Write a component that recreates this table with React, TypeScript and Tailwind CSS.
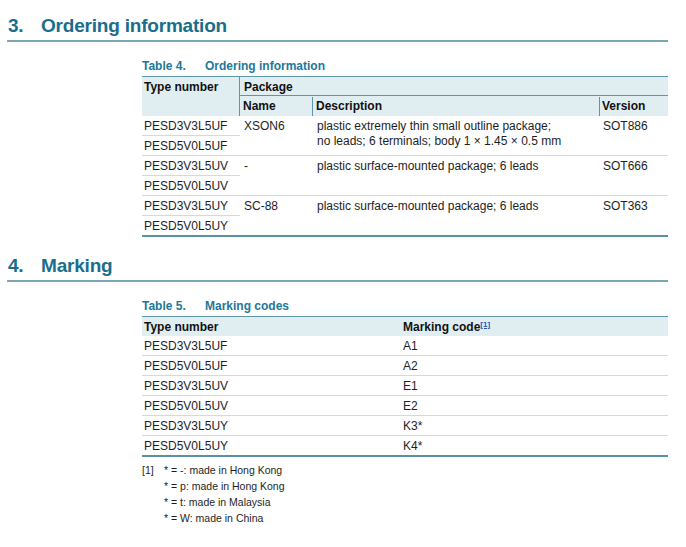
import React from "react";

const font = { fontFamily: '"Liberation Sans", Arial, sans-serif' };

function Heading({ num, title }: { num: string; title: string }) {
  return (
    <div className="ml-[7px] w-[661px] border-b-2 border-[#79a7b7] pb-[3px] pl-[1px]">
      <div className="flex text-[19px] font-bold leading-[22px] tracking-[-0.2px] text-[#1b6d8b]">
        <span className="w-[33px]">{num}</span>
        <span>{title}</span>
      </div>
    </div>
  );
}

function Caption({ num, title, mt }: { num: string; title: string; mt: string }) {
  return (
    <div className={`${mt} mb-[3px] ml-[142px] flex text-[12px] font-bold leading-[14px] text-[#21789a]`}>
      <span className="w-[63px]">{num}</span>
      <span>{title}</span>
    </div>
  );
}

type Group = {
  types: [string, string];
  name: string;
  desc: string[];
  version: string;
};

const groups: Group[] = [
  {
    types: ["PESD3V3L5UF", "PESD5V0L5UF"],
    name: "XSON6",
    desc: ["plastic extremely thin small outline package;", "no leads; 6 terminals; body 1 \u00d7 1.45 \u00d7 0.5 mm"],
    version: "SOT886",
  },
  {
    types: ["PESD3V3L5UV", "PESD5V0L5UV"],
    name: "-",
    desc: ["plastic surface-mounted package; 6 leads"],
    version: "SOT666",
  },
  {
    types: ["PESD3V3L5UY", "PESD5V0L5UY"],
    name: "SC-88",
    desc: ["plastic surface-mounted package; 6 leads"],
    version: "SOT363",
  },
];

const markings: [string, string][] = [
  ["PESD3V3L5UF", "A1"],
  ["PESD5V0L5UF", "A2"],
  ["PESD3V3L5UV", "E1"],
  ["PESD5V0L5UV", "E2"],
  ["PESD3V3L5UY", "K3*"],
  ["PESD5V0L5UY", "K4*"],
];

const notes = [
  "* = -: made in Hong Kong",
  "* = p: made in Hong Kong",
  "* = t: made in Malaysia",
  "* = W: made in China",
];

function OrderingTable() {
  return (
    <div className="ml-[142px] w-[526px] text-[12px] text-[#1e1e1e]">
      <div className="flex border-t border-[#5e96a8] bg-[#e1eef1] font-bold text-[#111]">
        <div className="w-[98px] border-r border-[#5e96a8] pl-[2px] pt-[1px] leading-[19px]">Type number</div>
        <div className="flex flex-1 flex-col">
          <div className="h-[19px] border-b border-[#5e96a8] pl-[4px] pt-[1px] leading-[19px]">Package</div>
          <div className="flex h-[20px] pt-[1px] leading-[19px]">
            <div className="w-[73px] border-r border-[#5e96a8] pl-[3px]">Name</div>
            <div className="w-[287px] border-r border-[#5e96a8] pl-[3px]">Description</div>
            <div className="flex-1 pl-[2px]">Version</div>
          </div>
        </div>
      </div>
      {groups.map((g, i) => (
        <div
          key={g.version}
          className={`flex ${i === groups.length - 1 ? "border-b-2 border-[#5a91a3]" : "border-b border-[#c6dee4]"}`}
        >
          <div className="w-[98px]">
            <div className="h-[20px] border-b border-[#c6dee4] pl-[2px] pt-[1px] leading-[19px]">{g.types[0]}</div>
            <div className="h-[19px] pl-[2px] pt-[1px] leading-[19px]">{g.types[1]}</div>
          </div>
          <div className="w-[73px] pl-[4px] pt-[3px] leading-[15px]">{g.name}</div>
          <div className="w-[287px] pl-[4px] pt-[3px] leading-[15px]">
            {g.desc.map((d) => (
              <div key={d}>{d}</div>
            ))}
          </div>
          <div className="flex-1 pl-[3px] pt-[3px] leading-[15px]">{g.version}</div>
        </div>
      ))}
    </div>
  );
}

function MarkingTable() {
  return (
    <div className="ml-[142px] w-[526px] text-[12px] text-[#1e1e1e]">
      <div className="flex h-[20px] border-t border-[#5e96a8] bg-[#e1eef1] pt-[1px] font-bold leading-[19px] text-[#111]">
        <div className="w-[259px] pl-[2px]">Type number</div>
        <div className="flex-1 pl-[2px]">
          Marking code
          <span className="relative -top-[4px] text-[8px] font-bold text-[#2456b8] underline">[1]</span>
        </div>
      </div>
      {markings.map(([t, m], i) => (
        <div
          key={t}
          className={`flex pt-[1px] leading-[19px] ${i === markings.length - 1 ? "h-[21px] border-b-2 border-[#5a91a3]" : "h-[20px] border-b border-[#c6dee4]"}`}
        >
          <div className="w-[259px] pl-[2px]">{t}</div>
          <div className="flex-1 pl-[2px]">{m}</div>
        </div>
      ))}
    </div>
  );
}

export default function App() {
  return (
    <div className="h-[547px] w-[686px] overflow-hidden bg-white pt-[15px]" style={font}>
      <Heading num="3." title="Ordering information" />
      <Caption num="Table 4." title="Ordering information" mt="mt-[17px]" />
      <OrderingTable />
      <div className="mt-[18px]">
        <Heading num="4." title="Marking" />
      </div>
      <Caption num="Table 5." title="Marking codes" mt="mt-[17px]" />
      <MarkingTable />
      <div className="ml-[142px] mt-[5px] flex text-[10.5px] leading-[16px] text-[#1e1e1e]">
        <div className="w-[22px]">[1]</div>
        <div className="flex flex-col">
          {notes.map((n) => (
            <div key={n}>{n}</div>
          ))}
        </div>
      </div>
    </div>
  );
}
